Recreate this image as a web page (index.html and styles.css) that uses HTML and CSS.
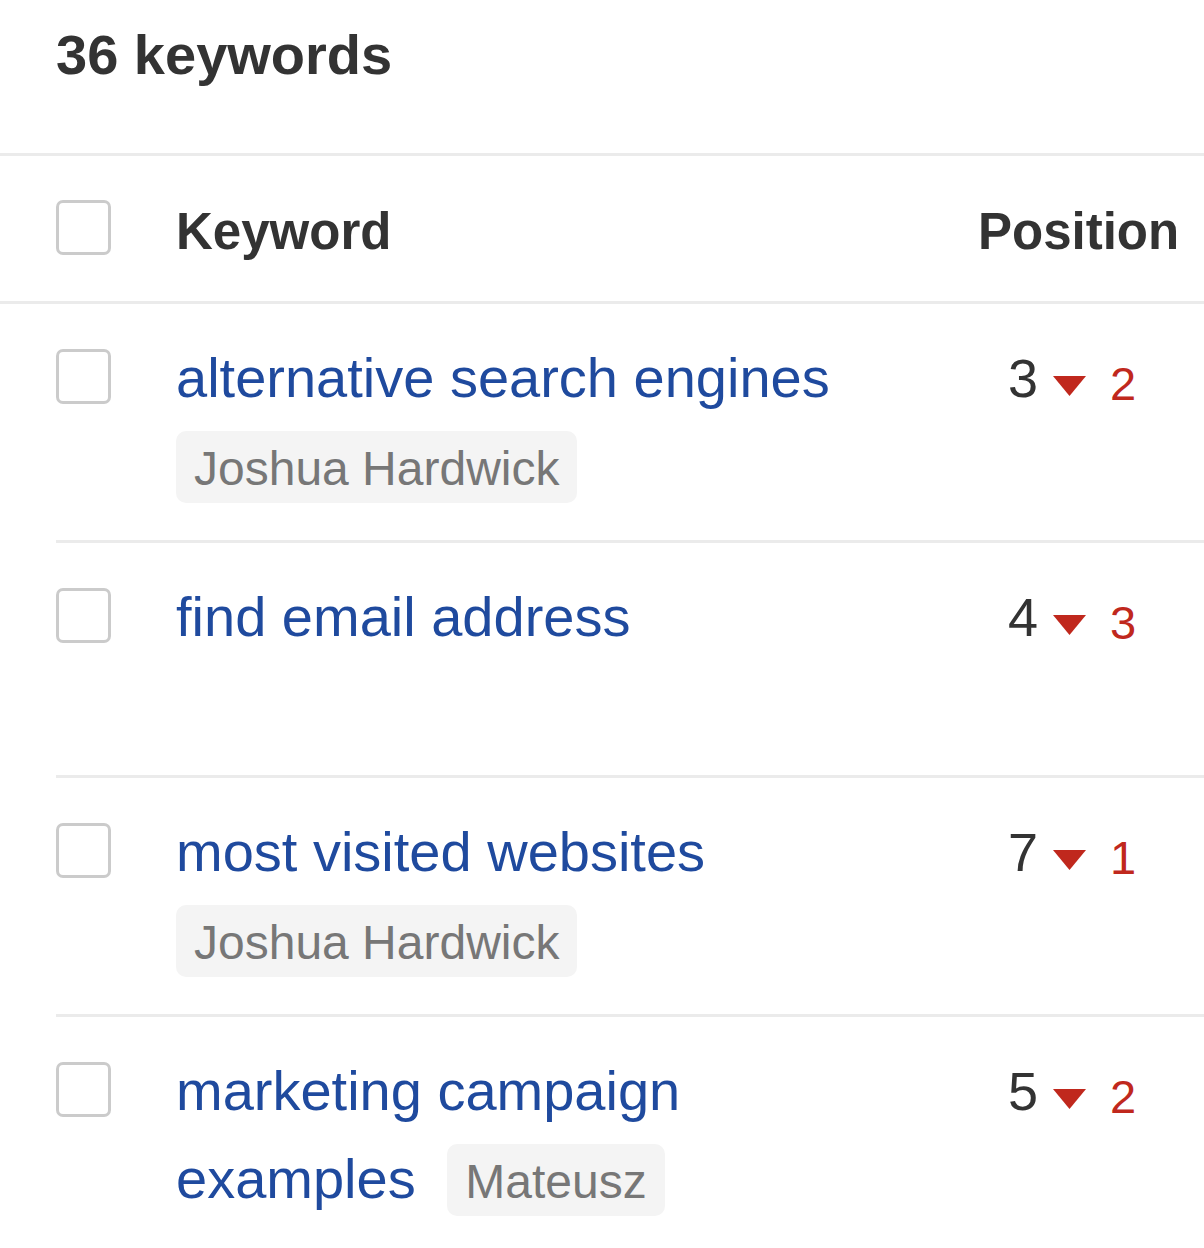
FILE: index.html
```html
<!DOCTYPE html>
<html lang="en">
<head>
<meta charset="utf-8">
<title>36 keywords</title>
<link rel="stylesheet" href="styles.css">
</head>
<body>
<div class="page">
  <div class="title-bar"><h1 class="title">36 keywords</h1></div>
  <div class="head-row">
    <div class="cb-cell"><span class="checkbox"></span></div>
    <div class="head-kw">Keyword</div>
    <div class="head-pos">Position</div>
  </div>
  <div class="rows">
    <div class="row">
      <div class="cb-cell"><span class="checkbox"></span></div>
      <div class="kw-cell"><a class="kw" href="#">alternative search engines</a> <span class="tag">Joshua Hardwick</span></div>
      <div class="pos-cell"><span class="pos">3</span><svg class="tri" width="33" height="20" viewBox="0 0 33 20"><polygon points="0,0 33,0 16.5,20" fill="#c0281d"/></svg><span class="delta">2</span></div>
    </div>
    <div class="row">
      <div class="cb-cell"><span class="checkbox"></span></div>
      <div class="kw-cell"><a class="kw" href="#">find email address</a></div>
      <div class="pos-cell"><span class="pos">4</span><svg class="tri" width="33" height="20" viewBox="0 0 33 20"><polygon points="0,0 33,0 16.5,20" fill="#c0281d"/></svg><span class="delta">3</span></div>
    </div>
    <div class="row">
      <div class="cb-cell"><span class="checkbox"></span></div>
      <div class="kw-cell"><a class="kw" href="#">most visited websites</a> <span class="tag">Joshua Hardwick</span></div>
      <div class="pos-cell"><span class="pos">7</span><svg class="tri" width="33" height="20" viewBox="0 0 33 20"><polygon points="0,0 33,0 16.5,20" fill="#c0281d"/></svg><span class="delta">1</span></div>
    </div>
    <div class="row">
      <div class="cb-cell"><span class="checkbox"></span></div>
      <div class="kw-cell"><a class="kw" href="#">marketing campaign examples</a> <span class="tag">Mateusz</span></div>
      <div class="pos-cell"><span class="pos">5</span><svg class="tri" width="33" height="20" viewBox="0 0 33 20"><polygon points="0,0 33,0 16.5,20" fill="#c0281d"/></svg><span class="delta">2</span></div>
    </div>
  </div>
</div>
</body>
</html>
```
FILE: styles.css
```css
* { box-sizing: border-box; }
html, body { margin: 0; padding: 0; background: #fff; }
body {
  font-family: "Liberation Sans", Arial, Helvetica, sans-serif;
  color: #333;
}
.page { width: 1204px; }

.title-bar {
  padding: 23px 0 66px 56px;
  border-bottom: 3px solid #ebebeb;
}
.title {
  margin: 0;
  font-size: 56px;
  line-height: 64px;
  font-weight: 700;
  color: #333;
}

.head-row {
  display: grid;
  grid-template-columns: 120px 1fr 226px;
  align-items: start;
  height: 148px;
  padding-left: 56px;
  border-bottom: 3px solid #ebebeb;
}
.head-row .cb-cell { padding-top: 44px; }
.head-kw, .head-pos {
  padding-top: 46px;
  font-size: 51px;
  line-height: 60px;
  font-weight: 700;
  color: #333;
}
.head-pos { text-align: right; padding-right: 27px; }

.checkbox {
  display: block;
  width: 55px;
  height: 55px;
  border: 3px solid #cbcbcb;
  border-radius: 7px;
  background: #fff;
}

.rows { margin-left: 56px; }
.row {
  display: grid;
  grid-template-columns: 120px 1fr 226px;
  align-items: start;
  min-height: 235px;
  padding: 30px 0;
}
.row + .row { border-top: 3px solid #ebebeb; }
.row .cb-cell { padding-top: 15px; }

.kw-cell {
  font-size: 56px;
  line-height: 88px;
  padding-right: 80px;
  word-spacing: 16px;
}
.kw {
  color: #1f4a9e;
  text-decoration: none;
  word-spacing: normal;
}
.tag {
  display: inline-block;
  word-spacing: normal;
  font-size: 48px;
  line-height: 48px;
  padding: 14px 18px 10px;
  border-radius: 10px;
  background: #f4f4f4;
  color: #777;
}

.pos-cell {
  padding-left: 30px;
  font-size: 54px;
  line-height: 88px;
  white-space: nowrap;
  color: #333;
}
.tri {
  display: inline-block;
  vertical-align: baseline;
  margin-left: 15px;
  margin-bottom: 1px;
}
.delta {
  display: inline-block;
  margin-left: 24px;
  font-size: 47px;
  color: #c0281d;
  vertical-align: -3px;
}
```
